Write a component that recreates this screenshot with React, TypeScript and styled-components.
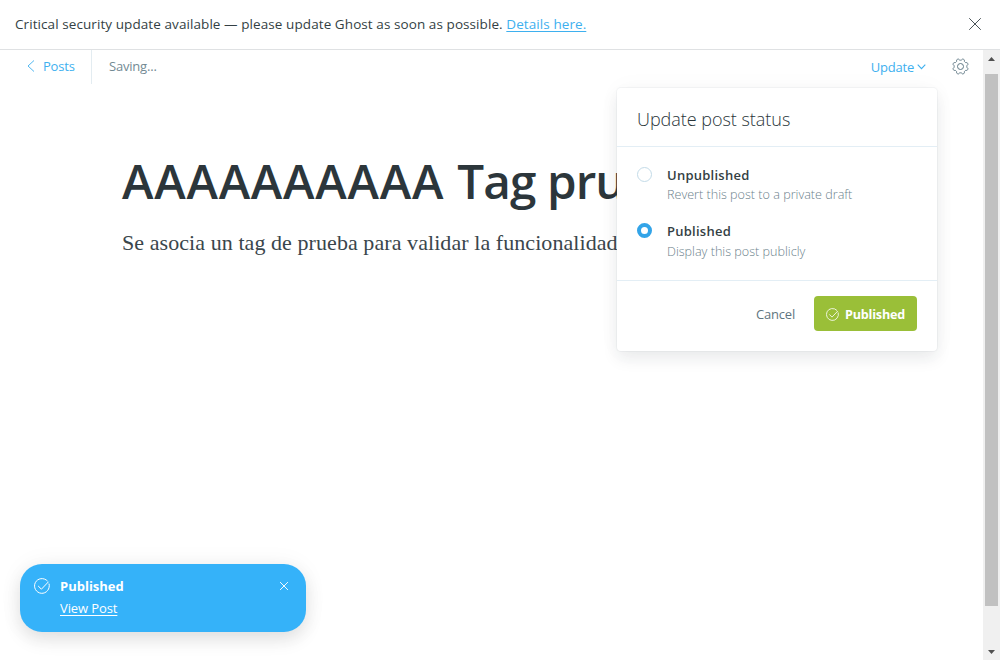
import React from "react";
import styled, { createGlobalStyle } from "styled-components";

const GlobalStyle = createGlobalStyle`
  * { box-sizing: border-box; }
  body { margin: 0; background: #fff; overflow: hidden; }
  body, button { font-family: "Open Sans", "Noto Sans", sans-serif; }
`;

const Page = styled.div`
  position: relative;
  display: flex;
  flex-direction: column;
  width: 1000px;
  height: 660px;
  color: #394047;
`;

const Banner = styled.header`
  display: flex;
  align-items: center;
  justify-content: space-between;
  height: 50px;
  padding: 0 19px 1px 15px;
  border-bottom: 1px solid #dfe1e3;
  font-size: 13.5px;
  line-height: 20px;
  color: #343f44;
`;

const Text = styled.span<{ $track?: number }>`
  white-space: nowrap;
  letter-spacing: ${(p) => p.$track ?? 0}px;
`;

const Link = styled.a<{ $light?: boolean }>`
  color: ${(p) => (p.$light ? "#fff" : "#3eb0ef")};
  text-decoration: underline;
  text-decoration-thickness: 1px;
  text-underline-offset: 2px;
`;

const IconButton = styled.button`
  display: flex;
  padding: 0;
  border: 0;
  background: none;
  color: inherit;
`;

const Body = styled.div`
  display: flex;
  flex: 1;
  min-height: 0;
`;

const Editor = styled.main`
  flex: 1;
  min-width: 0;
`;

const Toolbar = styled.nav`
  display: flex;
  align-items: center;
  height: 32px;
  padding-right: 14px;
  font-size: 13px;
  line-height: 18px;
  color: #738a94;
`;

const BackLink = styled.a`
  display: flex;
  align-items: center;
  gap: 8px;
  width: 92px;
  height: 34px;
  padding: 0 0 2px 27px;
  margin-bottom: -2px;
  border-right: 1px solid #e3ecf1;
  color: #3eb0ef;
`;

const SaveState = styled.div`
  flex: 1;
  padding-left: 17px;
`;

const UpdateTrigger = styled.div`
  display: flex;
  align-items: center;
  gap: 3px;
  margin-right: 26px;
  padding-top: 2px;
  color: #3eb0ef;
`;

const Article = styled.article`
  padding: 66px 0 0 122px;
  white-space: nowrap;
`;

const Title = styled.h1`
  margin: 0;
  font-size: 47.6px;
  line-height: 66px;
  font-weight: 560;
  color: #2c363b;
`;

const Paragraph = styled.p`
  margin: 0;
  padding-top: 13px;
  font-family: Georgia, "Liberation Serif", serif;
  font-size: 22px;
  line-height: 32px;
  color: #3a464c;
`;

const Scrollbar = styled.div`
  display: flex;
  flex-direction: column;
  align-items: center;
  width: 17px;
  padding: 7px 2px 6px;
  background: #f0f0f0;
`;

const Thumb = styled.div`
  width: 13px;
  height: 532px;
  margin: 13px 0 auto;
  background: #c1c1c1;
`;

const Popover = styled.section`
  position: absolute;
  left: 617px;
  top: 88px;
  width: 320px;
  height: 263px;
  border-radius: 4px;
  background: #fff;
  box-shadow: 0 0 0 1px rgba(99, 114, 130, 0.06), 0 8px 16px rgba(27, 39, 51, 0.08), 0 0 24px rgba(27, 39, 51, 0.03);
`;

const PopoverTitle = styled.h2`
  height: 59px;
  margin: 0;
  padding: 19px 20px 0;
  border-bottom: 1px solid #e3eef5;
  font-size: 18px;
  line-height: 24px;
  font-weight: 350;
  color: #2a353a;
`;

const Options = styled.div`
  display: flex;
  flex-direction: column;
  gap: 17px;
  height: 134px;
  padding: 18px 20px 0;
  border-bottom: 1px solid #e3eef5;
`;

const Option = styled.label`
  display: flex;
  gap: 15px;
  height: 39px;
`;

const Radio = styled.span<{ $checked?: boolean }>`
  width: 15px;
  height: 15px;
  margin-top: 2px;
  border: ${(p) => (p.$checked ? "4px solid #33a4e8" : "1px solid #c3dbe8")};
  border-radius: 50%;
  background: #fff;
`;

const OptionText = styled.span<{ $gap?: number }>`
  display: flex;
  flex-direction: column;
  gap: ${(p) => p.$gap ?? 0}px;
  font-size: 13px;
  line-height: 20px;
`;

const OptionName = styled.strong`
  font-weight: 600;
  color: #343f44;
`;

const OptionHint = styled.span`
  font-size: 12.6px;
  font-weight: 340;
  color: #6c828c;
`;

const Actions = styled.footer`
  display: flex;
  align-items: center;
  justify-content: flex-end;
  gap: 19px;
  padding: 15px 20px 0;
  font-size: 13px;
  color: #5f7580;
`;

const SaveButton = styled.button`
  display: flex;
  align-items: center;
  gap: 6px;
  width: 103px;
  height: 35px;
  padding: 1px 0 0 12px;
  border: 0;
  border-radius: 4px;
  background: #9abf38;
  color: #fff;
  font-size: 12.6px;
  font-weight: 700;
`;

const Toast = styled.aside`
  position: absolute;
  left: 20px;
  top: 564px;
  display: flex;
  align-items: flex-start;
  width: 286px;
  height: 68px;
  padding: 14px 18px 0 14px;
  border-radius: 22px;
  background: #35b2f9;
  color: #fff;
  box-shadow: 0 8px 18px rgba(0, 0, 0, 0.1), 0 0 24px rgba(0, 0, 0, 0.05);
`;

const ToastText = styled.div`
  display: flex;
  flex: 1;
  flex-direction: column;
  padding-left: 10px;
  font-size: 13px;
  line-height: 22px;
  margin-top: -3px;
`;

const ToastClose = styled(IconButton)`
  padding-top: 4px;
`;

const Cross = ({ size, weight }: { size: number; weight: number }) => (
  <svg width={size} height={size} viewBox="0 0 12 12" fill="none" stroke="currentColor" strokeWidth={weight} strokeLinecap="round">
    <path d="M.5.5l11 11M11.5.5l-11 11" />
  </svg>
);

const CheckCircle = ({ size }: { size: number }) => (
  <svg width={size} height={size} viewBox="0 0 16 16" fill="none" stroke="currentColor" strokeWidth="1" strokeLinecap="round" strokeLinejoin="round">
    <path d="M13.3 2.8A7.4 7.4 0 1 0 15.1 6" />
    <path d="M4.4 8.2l3 3L14.3 4" />
  </svg>
);

const gearPath = (() => {
  const points: string[] = [];
  for (let i = 0; i <= 96; i++) {
    const a = (i / 96) * Math.PI * 2;
    const wave = Math.max(-1, Math.min(1, 1.6 * Math.cos(8 * a)));
    const r = 7.05 + 0.75 * wave;
    points.push(`${(8.5 + r * Math.sin(a + Math.PI / 8)).toFixed(2)} ${(8.5 - r * Math.cos(a + Math.PI / 8)).toFixed(2)}`);
  }
  return `M${points.join("L")}Z`;
})();

const Gear = () => (
  <svg width="17" height="17" viewBox="0 0 17 17" fill="none" stroke="#607985" strokeWidth="1" strokeLinejoin="round">
    <path d={gearPath} />
    <circle cx="8.5" cy="8.5" r="3" />
  </svg>
);

export default function App() {
  return (
    <Page>
      <GlobalStyle />
      <Banner>
        <Text $track={0.08}>
          Critical security update available — please update Ghost as soon as possible. <Link>Details here.</Link>
        </Text>
        <IconButton aria-label="Dismiss">
          <Cross size={12} weight={0.9} />
        </IconButton>
      </Banner>
      <Body>
        <Editor>
          <Toolbar>
            <BackLink>
              <svg width="8" height="12" viewBox="0 0 8 12" fill="none" stroke="currentColor" strokeWidth=".9">
                <path d="M7 .5L1 6l6 5.5" />
              </svg>
              <Text $track={-0.2}>Posts</Text>
            </BackLink>
            <SaveState>
              <Text $track={-0.2}>Saving...</Text>
            </SaveState>
            <UpdateTrigger>
              <Text $track={-0.2}>Update</Text>
              <svg width="9" height="6" viewBox="0 0 9 6" fill="none" stroke="currentColor" strokeWidth="1.1">
                <path d="M.7.7l3.8 4 3.8-4" />
              </svg>
            </UpdateTrigger>
            <IconButton aria-label="Settings">
              <Gear />
            </IconButton>
          </Toolbar>
          <Article>
            <Title>
              <Text $track={0.75}>AAAAAAAAAA </Text>
              <Text $track={-0.9}>Tag prueba</Text>
            </Title>
            <Paragraph>
              <Text $track={0.07}>Se asocia un tag de prueba para validar la funcionalidad</Text>
            </Paragraph>
          </Article>
        </Editor>
        <Scrollbar>
          <svg width="7" height="4" viewBox="0 0 7 4">
            <path d="M0 4L3.5 0 7 4z" fill="#505050" />
          </svg>
          <Thumb />
          <svg width="7" height="4" viewBox="0 0 7 4">
            <path d="M0 0L3.5 4 7 0z" fill="#505050" />
          </svg>
        </Scrollbar>
      </Body>
      <Popover>
        <PopoverTitle>
          <Text $track={-0.03}>Update post status</Text>
        </PopoverTitle>
        <Options>
          <Option>
            <Radio />
            <OptionText>
              <OptionName><Text $track={0.25}>Unpublished</Text></OptionName>
              <OptionHint><Text>Revert this post to a private draft</Text></OptionHint>
            </OptionText>
          </Option>
          <Option>
            <Radio $checked />
            <OptionText $gap={1}>
              <OptionName><Text $track={0.25}>Published</Text></OptionName>
              <OptionHint><Text>Display this post publicly</Text></OptionHint>
            </OptionText>
          </Option>
        </Options>
        <Actions>
          <Text $track={-0.2}>Cancel</Text>
          <SaveButton>
            <CheckCircle size={13} />
            <Text $track={-0.2}>Published</Text>
          </SaveButton>
        </Actions>
      </Popover>
      <Toast>
        <CheckCircle size={16} />
        <ToastText>
          <strong><Text $track={0}>Published</Text></strong>
          <Link $light><Text $track={-0.1}>View Post</Text></Link>
        </ToastText>
        <ToastClose aria-label="Close">
          <Cross size={8} weight={1.4} />
        </ToastClose>
      </Toast>
    </Page>
  );
}
